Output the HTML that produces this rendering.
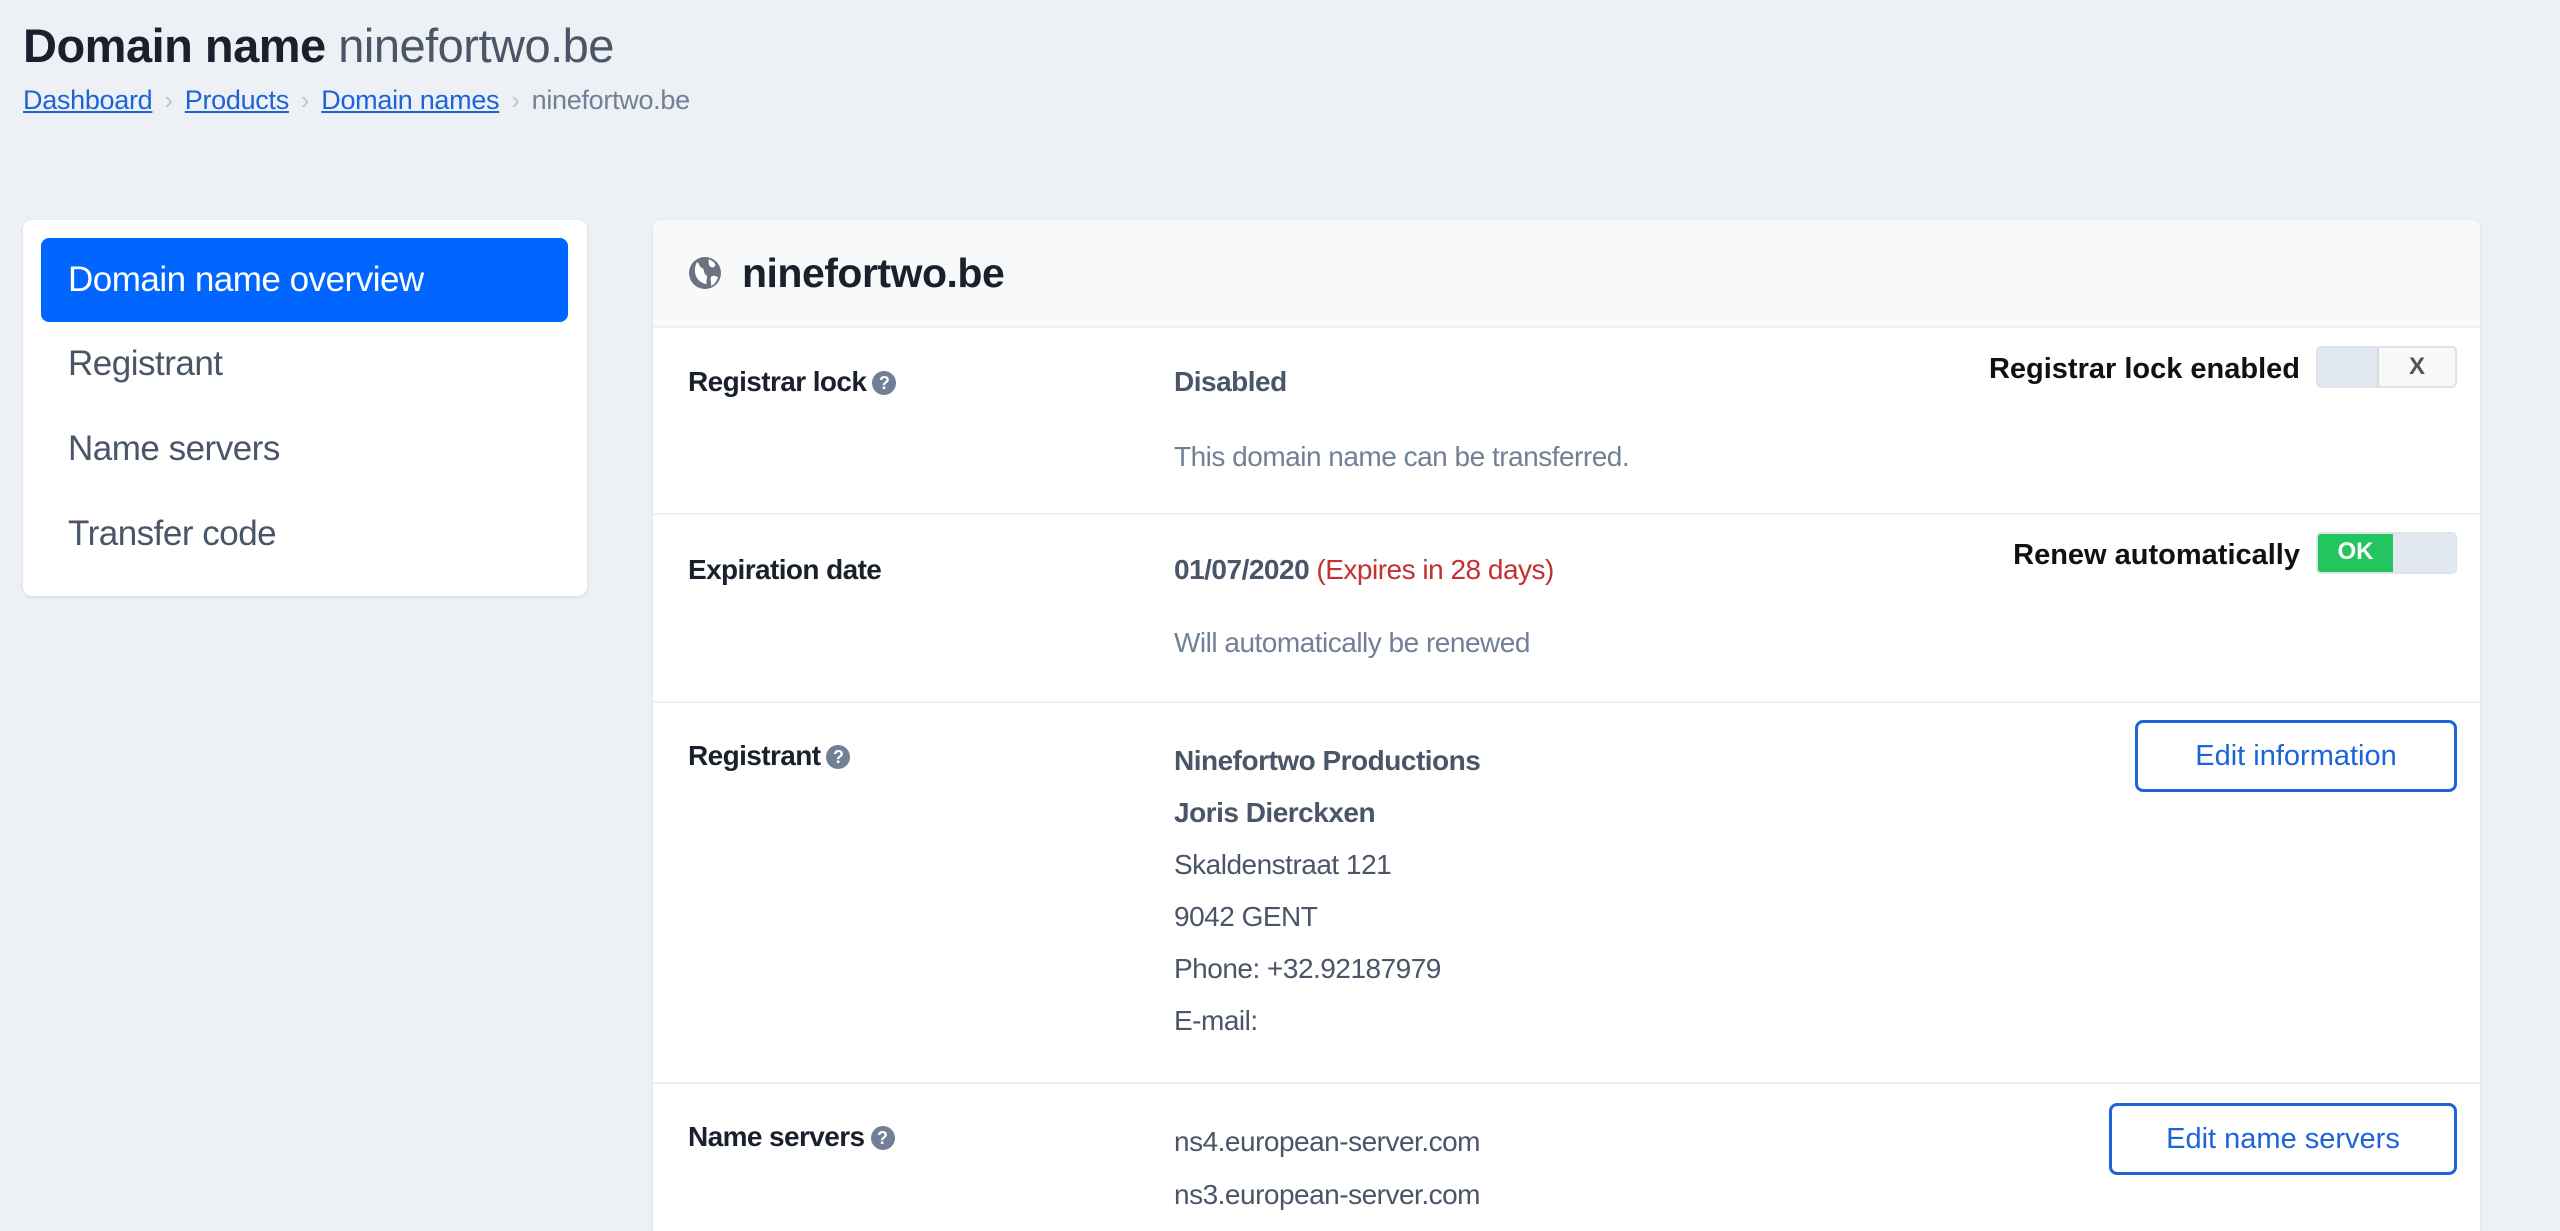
<!DOCTYPE html>
<html><head><meta charset="utf-8"><style>
*{box-sizing:border-box;margin:0;padding:0}
html,body{width:2560px;height:1231px;overflow:hidden;background:#edf1f5;font-family:"Liberation Sans",sans-serif;position:relative}
.abs{position:absolute}
h1{position:absolute;left:23px;top:18px;font-size:47px;line-height:56px;color:#1a202c;font-weight:bold;letter-spacing:-0.5px;white-space:nowrap}
h1 span{font-weight:normal;color:#4a5568}
.bc{position:absolute;left:23px;top:82px;font-size:27px;line-height:36px;color:#718096;white-space:nowrap;letter-spacing:-0.3px}
.bc a{color:#1c64d8;text-decoration:underline}
.bc i{font-style:normal;color:#bcc5d0;margin:0 12px;font-size:26px}
.side{left:23px;top:220px;width:564px;height:376px;background:#fff;border-radius:9px;box-shadow:0 1px 3px rgba(0,0,0,.12)}
.act{left:18px;top:18px;width:527px;height:84px;background:#0066ff;border-radius:8px;color:#fff;font-size:35px;line-height:84px;padding-left:27px;letter-spacing:-0.5px}
.it{left:45px;font-size:35px;color:#4a5568;letter-spacing:-0.5px;line-height:40px}
.card{left:653px;top:220px;width:1827px;height:1011px;background:#fff;border-radius:9px 9px 0 0;box-shadow:0 1px 3px rgba(0,0,0,.1);overflow:hidden}
.hd{left:0;top:0;width:100%;height:107px;background:#f7f9fb}
.hr{left:0;width:100%;height:2px;background:#eef1f4}
.lab{left:35px;font-size:28px;font-weight:bold;color:#1a202c;letter-spacing:-0.6px;line-height:34px;white-space:nowrap}
.val{left:521px;font-size:28px;color:#4a5568;letter-spacing:-0.5px;line-height:34px;white-space:nowrap}
.val b{color:#4a5568}
.sub{color:#718096}
.q{display:inline-block;width:24px;height:24px;border-radius:50%;background:#718096;color:#fff;font-size:18px;line-height:24px;text-align:center;vertical-align:2px;margin-left:6px;letter-spacing:0}
.tl{right:180px;font-size:29px;font-weight:bold;color:#111;line-height:34px;white-space:nowrap}
.tg{left:1663px;width:141px;height:42px;border:2px solid #dfe4ea;border-radius:5px;background:#f7f9fb;overflow:hidden}
.btn{border:3px solid #1c64d8;border-radius:8px;color:#1c64d8;font-size:29px;text-align:center;white-space:nowrap}
</style></head><body>
<h1>Domain name <span>ninefortwo.be</span></h1>
<div class="bc"><a>Dashboard</a><i>›</i><a>Products</a><i>›</i><a>Domain names</a><i>›</i>ninefortwo.be</div>

<div class="abs side">
 <div class="abs act">Domain name overview</div>
 <div class="abs it" style="top:124px">Registrant</div>
 <div class="abs it" style="top:209px">Name servers</div>
 <div class="abs it" style="top:294px">Transfer code</div>
</div>

<div class="abs card">
 <div class="abs hd"></div>
 <svg class="abs" style="left:35px;top:36px" width="34" height="34" viewBox="0 0 34 34"><circle cx="17" cy="17" r="16" fill="#6b7280"/><path d="M9 6c3 2 2 5 5 6s1 5 4 7-1 6 1 9c-4 0-9-3-11-8s-1-10 1-14zM21 3c2 2 5 2 6 5s-2 4-4 3-3-4-2-8zM24 20c3-1 5 1 6 1-1 4-4 8-7 9 1-3-2-8 1-10z" fill="#fff"/></svg>
 <div class="abs" style="left:89px;top:30px;font-size:41px;font-weight:bold;color:#1a202c;letter-spacing:-0.5px;line-height:46px">ninefortwo.be</div>
 <div class="abs hr" style="top:106px"></div>

 <div class="abs lab" style="top:145px">Registrar lock<span class="q">?</span></div>
 <div class="abs val" style="top:145px"><b>Disabled</b></div>
 <div class="abs val sub" style="top:220px">This domain name can be transferred.</div>
 <div class="abs tl" style="top:132px">Registrar lock enabled</div>
 <div class="abs tg" style="top:126px"><div class="abs" style="left:0;top:0;width:61px;height:38px;background:#e2e8f0;border-right:2px solid #d5dbe3"></div><div class="abs" style="left:61px;top:0;width:76px;height:38px;text-align:center;font-weight:bold;color:#555;font-size:24px;line-height:38px">X</div></div>
 <div class="abs hr" style="top:293px"></div>

 <div class="abs lab" style="top:333px">Expiration date</div>
 <div class="abs val" style="top:333px"><b>01/07/2020</b> <span style="color:#c53030">(Expires in 28 days)</span></div>
 <div class="abs val sub" style="top:406px">Will automatically be renewed</div>
 <div class="abs tl" style="top:318px">Renew automatically</div>
 <div class="abs tg" style="top:312px;background:#e2e8f0"><div class="abs" style="left:0;top:0;width:75px;height:38px;background:#22c55e;color:#fff;font-weight:bold;font-size:24px;line-height:36px;text-align:center">OK</div></div>
 <div class="abs hr" style="top:481px"></div>

 <div class="abs lab" style="top:519px">Registrant<span class="q">?</span></div>
 <div class="abs val" style="top:515px;line-height:52px"><b>Ninefortwo Productions</b><br><b>Joris Dierckxen</b><br>Skaldenstraat 121<br>9042 GENT<br>Phone: +32.92187979<br>E-mail:</div>
 <div class="abs btn" style="left:1482px;top:500px;width:322px;height:72px;line-height:66px">Edit information</div>
 <div class="abs hr" style="top:862px"></div>

 <div class="abs lab" style="top:900px">Name servers<span class="q">?</span></div>
 <div class="abs val" style="top:895px;line-height:53px">ns4.european-server.com<br>ns3.european-server.com</div>
 <div class="abs btn" style="left:1456px;top:883px;width:348px;height:72px;line-height:66px">Edit name servers</div>
</div>
</body></html>
